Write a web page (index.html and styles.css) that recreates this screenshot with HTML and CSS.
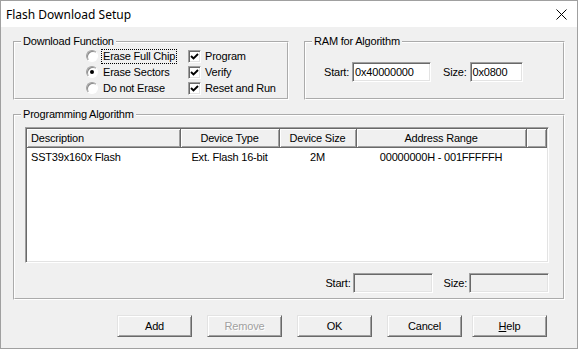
FILE: index.html
```html
<!DOCTYPE html>
<html lang="en">
<head>
  <meta charset="UTF-8" />
  <title>Flash Download Setup</title>
  <link rel="stylesheet" href="styles.css">
</head>
<body>
  <div class="window">
    <div class="titlebar">
      <span class="title">Flash Download Setup</span>
      <svg class="close" width="11" height="11" viewBox="0 0 11 11">
        <path d="M0.5 0.5 L10.5 10.5 M10.5 0.5 L0.5 10.5" stroke="#000" stroke-width="1" fill="none"/>
      </svg>
    </div>

    <div class="content">
      <div class="top-row">
        <fieldset class="group download">
          <legend>Download Function</legend>
          <div class="options">
            <div class="radios">
              <div class="opt"><span class="radio"></span><span class="focus">Erase Full Chip</span></div>
              <div class="opt"><span class="radio on"></span>Erase Sectors</div>
              <div class="opt"><span class="radio"></span>Do not Erase</div>
            </div>
            <div class="checks">
              <div class="opt"><span class="check"><svg width="9" height="9" viewBox="0 0 9 9"><path d="M1 4 L3.5 6.5 L8 2" stroke="#000" stroke-width="1.9" fill="none"/></svg></span>Program</div>
              <div class="opt"><span class="check"><svg width="9" height="9" viewBox="0 0 9 9"><path d="M1 4 L3.5 6.5 L8 2" stroke="#000" stroke-width="1.9" fill="none"/></svg></span>Verify</div>
              <div class="opt"><span class="check"><svg width="9" height="9" viewBox="0 0 9 9"><path d="M1 4 L3.5 6.5 L8 2" stroke="#000" stroke-width="1.9" fill="none"/></svg></span>Reset and Run</div>
            </div>
          </div>
        </fieldset>

        <fieldset class="group ram">
          <legend>RAM for Algorithm</legend>
          <div class="fields ram-fields">
            <span class="lbl">Start:</span><span class="edit start">0x40000000</span>
            <span class="lbl size-lbl">Size:</span><span class="edit size">0x0800</span>
          </div>
        </fieldset>
      </div>

      <fieldset class="group algo">
        <legend>Programming Algorithm</legend>
        <div class="algo-inner">
          <div class="list">
            <table>
              <colgroup>
                <col style="width:153px"><col style="width:99px"><col style="width:77px"><col style="width:170px"><col>
              </colgroup>
              <thead>
                <tr>
                  <th class="left">Description</th>
                  <th>Device Type</th>
                  <th>Device Size</th>
                  <th>Address Range</th>
                  <th></th>
                </tr>
              </thead>
              <tbody>
                <tr>
                  <td class="left">SST39x160x Flash</td>
                  <td>Ext. Flash 16-bit</td>
                  <td>2M</td>
                  <td>00000000H - 001FFFFFH</td>
                  <td></td>
                </tr>
              </tbody>
            </table>
          </div>
          <div class="fields bottom-fields">
            <span class="lbl">Start:</span><span class="edit off wide"></span>
            <span class="lbl size-lbl2">Size:</span><span class="edit off wide"></span>
          </div>
        </div>
      </fieldset>

      <div class="buttons">
        <button class="btn first">Add</button>
        <button class="btn disabled">Remove</button>
        <button class="btn">OK</button>
        <button class="btn">Cancel</button>
        <button class="btn help"><u>H</u>elp</button>
      </div>
    </div>
  </div>
</body>
</html>
```

FILE: styles.css
```css
body {
  margin: 0;
  font-family: "Liberation Sans", Arial, sans-serif;
  font-size: 11px;
  letter-spacing: -0.2px;
  color: #000;
}
.window {
  width: 578px;
  height: 349px;
  box-sizing: border-box;
  border: 1px solid #a0a0a0;
  background-color: #f0f0f0;
}
.titlebar {
  height: 26px;
  background-color: #fff;
  display: flex;
  align-items: center;
  justify-content: space-between;
  padding: 0 10px 0 5px;
}
.title {
  font-family: "Noto Sans", sans-serif;
  font-size: 12px;
  letter-spacing: 0;
}
.content {
  padding: 8px 12px 0 12px;
}
.top-row {
  display: flex;
  gap: 15px;
}
.group {
  margin: 0;
  padding: 0;
  min-width: 0;
  box-sizing: border-box;
  border: 2px groove #fff;
}
.group legend {
  margin-left: 6px;
  padding: 0 2px;
  line-height: 13px;
}
.download {
  width: 276px;
}
.ram {
  width: 261px;
}
.options {
  display: flex;
  padding: 0 0 2px 71px;
}
.radios {
  width: 102px;
}
.opt {
  display: flex;
  align-items: center;
  height: 16px;
  white-space: nowrap;
}
.radio {
  width: 12px;
  height: 12px;
  box-sizing: border-box;
  margin-right: 5px;
  border-radius: 50%;
  border: 1px solid;
  border-color: #a0a0a0 #fff #fff #a0a0a0;
  box-shadow: inset 1px 1px 0 #8a8a8a;
  background-color: #fff;
  display: flex;
  align-items: center;
  justify-content: center;
}
.radio.on::after {
  content: "";
  width: 4px;
  height: 4px;
  border-radius: 50%;
  background-color: #000;
}
.focus {
  outline: 1px dotted #000;
  padding: 0 1px;
  margin-left: -1px;
  line-height: 13px;
}
.check {
  width: 13px;
  height: 13px;
  box-sizing: border-box;
  margin-right: 4px;
  border: 1px solid;
  border-color: #a0a0a0 #fff #fff #a0a0a0;
  box-shadow: inset 1px 1px 0 #696969, inset -1px -1px 0 #e3e3e3;
  background-color: #fff;
  display: flex;
  align-items: center;
  justify-content: center;
}
.fields {
  display: flex;
  align-items: center;
}
.ram-fields {
  padding: 14px 0 0 18px;
}
.lbl {
  margin-right: 3px;
}
.size-lbl {
  margin-left: 12px;
}
.size-lbl2 {
  margin-left: 11px;
}
.edit {
  height: 20px;
  box-sizing: border-box;
  padding: 0 2px;
  display: flex;
  align-items: center;
  background-color: #fff;
  border: 1px solid;
  border-color: #a0a0a0 #fff #fff #a0a0a0;
  box-shadow: inset 1px 1px 0 #696969, inset -1px -1px 0 #e3e3e3;
}
.edit.start {
  width: 79px;
}
.edit.size {
  width: 53px;
}
.edit.off {
  background-color: #f0f0f0;
}
.edit.wide {
  width: 80px;
}
.algo {
  width: 552px;
  margin-top: 8px;
}
.algo-inner {
  padding: 6px 14px 5px 10px;
}
.list {
  width: 524px;
  height: 136px;
  box-sizing: border-box;
  background-color: #fff;
  border: 1px solid;
  border-color: #a0a0a0 #fff #fff #a0a0a0;
  box-shadow: inset 1px 1px 0 #696969, inset -1px -1px 0 #e3e3e3;
  padding: 1px;
}
.list table {
  width: 520px;
  border-collapse: collapse;
  table-layout: fixed;
}
.list th {
  height: 18px;
  padding: 0;
  font-weight: normal;
  text-align: center;
  background-color: #f0f0f0;
  border-right: 1px solid #696969;
  border-bottom: 1px solid #696969;
  box-shadow: inset 1px 1px 0 #fff, inset -1px -1px 0 #a0a0a0;
  box-sizing: border-box;
}
.list td {
  height: 17px;
  padding: 1px 0 0 0;
  text-align: center;
  white-space: nowrap;
}
.list .left {
  text-align: left;
  padding-left: 4px;
}
.bottom-fields {
  justify-content: flex-end;
  margin-top: 10px;
}
.bottom-fields .lbl {
  margin-right: 2px;
}
.buttons {
  display: flex;
  gap: 15px;
  margin-top: 15px;
  padding-left: 104px;
}
.btn {
  width: 75px;
  height: 22px;
  padding: 0;
  font-family: "Liberation Sans", Arial, sans-serif;
  font-size: 11px;
  letter-spacing: -0.2px;
  color: #000;
  background-color: #f0f0f0;
  border: 1px solid;
  border-color: #e3e3e3 #696969 #696969 #e3e3e3;
  box-shadow: inset 1px 1px 0 #fff, inset -1px -1px 0 #a0a0a0;
}
.btn.disabled {
  color: #a0a0a0;
  text-shadow: 1px 1px 0 #fff;
}
.btn.help {
  margin-left: -5px;
}
```
